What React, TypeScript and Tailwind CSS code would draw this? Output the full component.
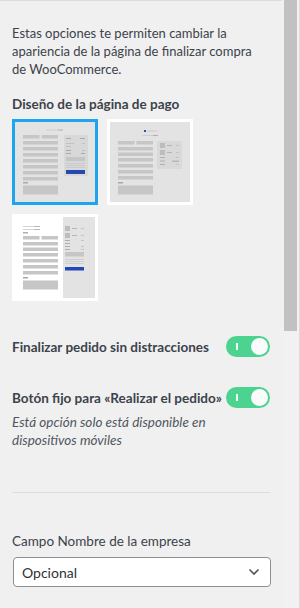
import React from 'react';

const Field = ({ x, y, w, h = 3.5, c = '#c6c6c6' }: { x: number; y: number; w: number; h?: number; c?: string }) => (
  <rect x={x} y={y} width={w} height={h} fill={c} />
);

const FormColumn = ({ rows }: { rows: number[] }) => (
  <g>
    <Field x={8} y={rows[0] - 6} w={16.5} />
    <Field x={26.5} y={rows[0] - 6} w={16.5} />
    {rows.map((y) => (
      <Field key={y} x={8} y={y} w={35} />
    ))}
    <Field x={8} y={60} w={5} h={1.5} c="#a8a8a8" />
    <Field x={8} y={63.5} w={35} h={9} />
  </g>
);

const ThumbOne = () => (
  <svg width="80" height="80" viewBox="0 0 80 80">
    <rect width="80" height="80" fill="#e3e3e3" />
    <rect x="31" y="7.5" width="12" height="1" fill="#cfcfcf" />
    <rect x="43" y="7.5" width="5" height="1" fill="#b0b0b0" />
    <FormColumn rows={[19, 25, 31, 37, 43, 49, 55]} />
    <rect x="49" y="13" width="24" height="41" fill="#d8d8d8" />
    <rect x="51" y="16" width="5" height="1" fill="#aaaaaa" />
    <rect x="65" y="16" width="5" height="1" fill="#aaaaaa" />
    <rect x="51" y="21" width="8" height="1" fill="#c0c0c0" />
    <rect x="51" y="24" width="5" height="1" fill="#c0c0c0" />
    <rect x="67" y="21" width="3" height="1" fill="#c0c0c0" />
    <rect x="51" y="28" width="5" height="1" fill="#a8a8a8" />
    <rect x="51" y="31" width="5" height="1" fill="#a8a8a8" />
    <rect x="67" y="28" width="3" height="1" fill="#c0c0c0" />
    <rect x="66" y="31" width="4" height="1" fill="#a8a8a8" />
    <rect x="51" y="35" width="19" height="4" fill="#c6c6c6" />
    <rect x="51" y="41" width="19" height="0.8" fill="#c8c8c8" />
    <rect x="51" y="43" width="19" height="0.8" fill="#c8c8c8" />
    <rect x="51" y="45" width="19" height="0.8" fill="#c8c8c8" />
    <rect x="51" y="48" width="19" height="3.5" fill="#2348b5" />
    <rect x="51" y="51" width="19" height="0.8" fill="#1a3a96" />
  </svg>
);

const ThumbTwo = () => (
  <svg width="80" height="80" viewBox="0 0 80 80">
    <rect width="80" height="80" fill="#e3e3e3" />
    <rect x="34" y="8" width="2" height="2" fill="#2c4fb4" />
    <rect x="37" y="8.5" width="10" height="1" fill="#cacaca" />
    <rect x="32" y="13" width="11" height="1" fill="#cfcfcf" />
    <rect x="43" y="13" width="5" height="1" fill="#b0b0b0" />
    <FormColumn rows={[25, 30.5, 36, 42, 48, 54]} />
    <rect x="47" y="19" width="25" height="28" fill="#d9d9d9" />
    <rect x="50" y="21" width="5" height="5" fill="#bdbdbd" />
    <rect x="57" y="23" width="5" height="1" fill="#b4b4b4" />
    <rect x="66" y="23" width="3" height="1" fill="#c4c4c4" />
    <rect x="50" y="28" width="5" height="5" fill="#bdbdbd" />
    <rect x="57" y="30" width="5" height="1" fill="#b4b4b4" />
    <rect x="66" y="30" width="3" height="1" fill="#c4c4c4" />
    <rect x="50" y="35" width="5" height="1" fill="#b0b0b0" />
    <rect x="66" y="35" width="3" height="1" fill="#c4c4c4" />
    <rect x="50" y="38.5" width="5" height="1" fill="#b0b0b0" />
    <rect x="62" y="38.5" width="7" height="1.5" fill="#b8b8b8" />
    <rect x="50" y="42" width="5" height="1" fill="#b0b0b0" />
    <rect x="66" y="42" width="3" height="1" fill="#c4c4c4" />
  </svg>
);

const ThumbThree = () => (
  <svg width="80" height="81" viewBox="0 0 80 81">
    <rect width="80" height="81" fill="#ffffff" />
    <rect x="48" y="0" width="32" height="81" fill="#e3e3e3" />
    <rect x="8" y="9" width="11" height="1" fill="#d4d4d4" />
    <rect x="19" y="9" width="6" height="1" fill="#b8b8b8" />
    <rect x="8" y="12" width="11" height="1" fill="#d4d4d4" />
    <rect x="19" y="12" width="6" height="1" fill="#b8b8b8" />
    <rect x="8" y="15" width="5" height="1.5" fill="#b0b0b0" />
    <FormColumn rows={[25, 30.5, 36, 42, 48, 54]} />
    <rect x="50" y="9" width="5" height="5" fill="#bdbdbd" />
    <rect x="57" y="11" width="5" height="1" fill="#b4b4b4" />
    <rect x="66" y="11" width="3" height="1" fill="#c4c4c4" />
    <rect x="50" y="16" width="5" height="5" fill="#bdbdbd" />
    <rect x="57" y="18" width="5" height="1" fill="#b4b4b4" />
    <rect x="66" y="18" width="3" height="1" fill="#c4c4c4" />
    <rect x="50" y="23" width="5" height="1" fill="#b0b0b0" />
    <rect x="66" y="23" width="3" height="1" fill="#c4c4c4" />
    <rect x="50" y="26" width="5" height="1" fill="#b0b0b0" />
    <rect x="50" y="29" width="5" height="1" fill="#b0b0b0" />
    <rect x="66" y="29" width="3" height="1" fill="#c4c4c4" />
    <rect x="50" y="32" width="5" height="1" fill="#b0b0b0" />
    <rect x="66" y="32" width="3" height="1" fill="#c4c4c4" />
    <rect x="50" y="35" width="19" height="4.5" fill="#c6c6c6" />
    <rect x="50" y="42" width="19" height="0.8" fill="#cacaca" />
    <rect x="50" y="44" width="19" height="0.8" fill="#cacaca" />
    <rect x="50" y="46" width="19" height="0.8" fill="#cacaca" />
    <rect x="50" y="50" width="19" height="3.5" fill="#2348b5" />
  </svg>
);

const Toggle = () => (
  <div className="relative h-[21px] w-[44px] shrink-0 rounded-full bg-[#4cd38f]">
    <span className="absolute left-[10px] top-[7px] h-[7px] w-[1.5px] bg-white/90" />
    <span className="absolute right-[2px] top-[2px] h-[17px] w-[17px] rounded-full bg-[#fbfbfb]" />
  </div>
);

export default function App() {
  return (
    <div className="flex h-[608px] w-[300px] overflow-hidden bg-[#f0f0f1] font-['Segoe_UI','Lato',sans-serif] text-[#3c434a]">
      <div className="w-[282px] shrink-0 border-t border-[#dcdcde] px-3 pt-[23px]">
        <p className="max-w-[252px] text-[13px] leading-[18px]">
          Estas opciones te permiten cambiar la apariencia de la página de finalizar compra de WooCommerce.
        </p>

        <h3 className="mt-4 text-[13.5px] font-bold leading-5">Diseño de la página de pago</h3>

        <div className="mt-[5px] flex flex-wrap gap-[9px]">
          <div className="border-[3px] border-[#1ea5ee] bg-white">
            <ThumbOne />
          </div>
          <div className="border-[3px] border-white bg-white">
            <ThumbTwo />
          </div>
          <div className="border-[3px] border-white bg-white">
            <ThumbThree />
          </div>
        </div>

        <div className="mt-[35px] flex items-center justify-between">
          <span className="whitespace-nowrap text-[13.5px] font-bold leading-5">Finalizar pedido sin distracciones</span>
          <Toggle />
        </div>

        <div className="mt-[30px] flex items-center justify-between">
          <span className="whitespace-nowrap text-[13.5px] font-bold leading-5">Botón fijo para «Realizar el pedido»</span>
          <Toggle />
        </div>
        <p className="mt-[5px] text-[13.5px] italic leading-[18px] text-[#50575e]">
          Está opción solo está disponible en dispositivos móviles
        </p>

        <div className="mt-[43px] h-px bg-[#dcdcde]" />

        <div className="mt-[38px] text-[13.5px] leading-5">Campo Nombre de la empresa</div>
        <div className="ml-px mt-[6px] flex h-[30px] w-[258px] items-center justify-between rounded-[4px] border border-[#8c8f94] bg-white pl-2 pr-2.5">
          <span className="text-[14px] text-[#2c3338]">Opcional</span>
          <svg width="12" height="8" viewBox="0 0 12 8" fill="none">
            <path d="M1.5 1.5 6 6l4.5-4.5" stroke="#50575e" strokeWidth="1.6" />
          </svg>
        </div>
      </div>

      <div className="w-[18px] shrink-0 border-r border-[#dcdcde] bg-[#f1f1f1] pl-[2px]">
        <div className="h-[331px] w-[13px] bg-[#c1c1c1]" />
      </div>
    </div>
  );
}
